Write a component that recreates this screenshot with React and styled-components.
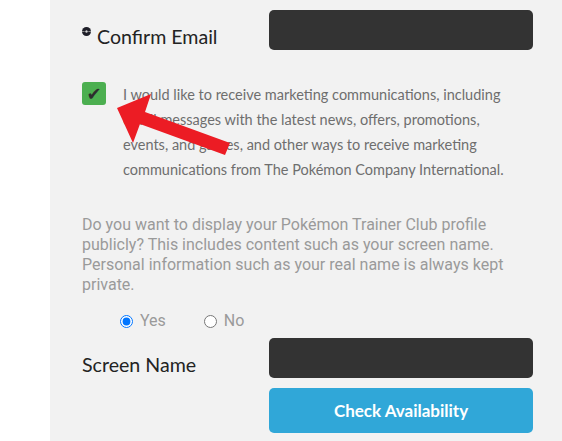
import React from "react";
import styled, { createGlobalStyle } from "styled-components";

const GlobalStyle = createGlobalStyle`
  body {
    margin: 0;
    background: #ffffff;
  }
`;

const Page = styled.div`
  position: relative;
  height: 441px;
  overflow: hidden;
`;

const Panel = styled.div`
  margin-left: 50px;
  height: 100%;
  background: #f2f2f2;
  padding: 10px 0 0 32px;
  box-sizing: border-box;
`;

const FieldRow = styled.div`
  display: grid;
  grid-template-columns: 187px 264px;
  align-items: start;
  margin-top: ${(props) => props.$top || 0}px;
`;

const Label = styled.label`
  display: flex;
  align-items: flex-start;
  gap: 6px;
  margin-top: 15px;
  font-family: Lato, "Open Sans", sans-serif;
  font-size: 19.6px;
  line-height: 24px;
  color: #232323;
`;

const Bullet = styled.svg`
  margin-top: 2px;
  flex-shrink: 0;
`;

const DarkInput = styled.div`
  height: 40px;
  border-radius: 5px;
  background: #333333;
`;

const Button = styled.button`
  grid-column: 2;
  height: 45px;
  border: none;
  border-radius: 5px;
  background: #30a7d8;
  color: #ffffff;
  font-family: Lato, "Open Sans", sans-serif;
  font-weight: 700;
  font-size: 17px;
`;

const ConsentRow = styled.div`
  display: flex;
  align-items: flex-start;
  gap: 17px;
  margin-top: 32px;
`;

const CheckBox = styled.span`
  width: 24px;
  height: 23px;
  border-radius: 3px;
  background: #4caf50;
  color: #2d2d2d;
  display: flex;
  align-items: center;
  justify-content: center;
  font-family: "DejaVu Sans", sans-serif;
  font-size: 18px;
  flex-shrink: 0;
`;

const ConsentText = styled.p`
  margin: 0;
  width: 392px;
  font-family: Lato, "Open Sans", sans-serif;
  font-size: 14.5px;
  line-height: 25px;
  color: #6e6e6e;
`;

const Privacy = styled.p`
  margin: 33px 0 0;
  width: 440px;
  font-family: Roboto, sans-serif;
  font-size: 16px;
  line-height: 20px;
  color: #9a9a9a;
`;

const RadioGroup = styled.div`
  display: flex;
  gap: 38px;
  margin-top: 16px;
  padding-left: 38px;
`;

const RadioOption = styled.label`
  display: flex;
  align-items: center;
  gap: 7px;
  font-family: Roboto, sans-serif;
  font-size: 16px;
  line-height: 20px;
  color: #9a9a9a;
`;

const Radio = styled.input`
  margin: 0;
  width: 13px;
  height: 13px;
`;

const Arrow = styled.svg`
  position: absolute;
  left: 0;
  top: 0;
  pointer-events: none;
`;

function PokeBullet() {
  return (
    <Bullet width="9" height="9" viewBox="0 0 9 9">
      <circle cx="4.5" cy="4.5" r="4.5" fill="#1e1e28" />
      <line x1="0" y1="4.5" x2="9" y2="4.5" stroke="#8a8a8a" strokeWidth="1" />
      <circle cx="4.5" cy="4.5" r="1.6" fill="#d8d8d8" stroke="#1e1e28" strokeWidth="0.8" />
    </Bullet>
  );
}

export default function App() {
  return (
    <Page>
      <GlobalStyle />
      <Panel>
        <FieldRow>
          <Label>
            <PokeBullet />
            Confirm Email
          </Label>
          <DarkInput />
        </FieldRow>

        <ConsentRow>
          <CheckBox>✔</CheckBox>
          <ConsentText>
            I would like to receive marketing communications, including
            email messages with the latest news, offers, promotions, events,
            and games, and other ways to receive marketing communications
            from The Pokémon Company International.
          </ConsentText>
        </ConsentRow>

        <Privacy>
          Do you want to display your Pokémon Trainer Club profile publicly?
          This includes content such as your screen name. Personal information
          such as your real name is always kept private.
        </Privacy>

        <RadioGroup>
          <RadioOption>
            <Radio type="radio" name="public" defaultChecked />
            Yes
          </RadioOption>
          <RadioOption>
            <Radio type="radio" name="public" />
            No
          </RadioOption>
        </RadioGroup>

        <FieldRow $top={7}>
          <Label>Screen Name</Label>
          <DarkInput />
        </FieldRow>
        <FieldRow $top={10}>
          <Button>Check Availability</Button>
        </FieldRow>
      </Panel>

      <Arrow width="562" height="441" viewBox="0 0 562 441">
        <polygon
          points="117,108 151,94 145,112 230,143 225,155 140,124 133,143"
          fill="#ec1c24"
        />
      </Arrow>
    </Page>
  );
}
